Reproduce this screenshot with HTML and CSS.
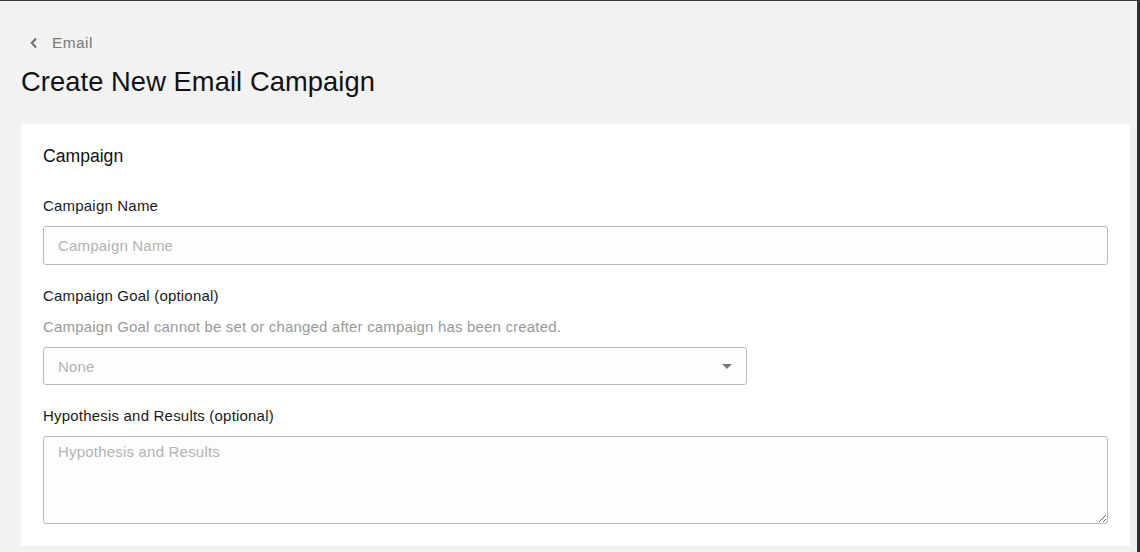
FILE: index.html
```html
<!DOCTYPE html>
<html lang="en">
<head>
<meta charset="utf-8">
<title>Create New Email Campaign</title>
<link rel="stylesheet" href="styles.css">
</head>
<body>
<div class="frame">
  <main class="page">
    <nav class="breadcrumb">
      <svg class="chev" width="10" height="12" viewBox="0 0 10 12"><path d="M7 1.5 L2.8 6 L7 10.5" fill="none" stroke="#6b6b6b" stroke-width="2"/></svg>
      <span class="crumb">Email</span>
    </nav>
    <h1 class="title">Create New Email Campaign</h1>
    <section class="card">
      <h2 class="card-title">Campaign</h2>
      <label class="label">Campaign Name</label>
      <input class="field" type="text" placeholder="Campaign Name">
      <label class="label label-gap">Campaign Goal (optional)</label>
      <p class="hint">Campaign Goal cannot be set or changed after campaign has been created.</p>
      <div class="select">
        <span class="select-value">None</span>
        <span class="caret"></span>
      </div>
      <label class="label label-gap">Hypothesis and Results (optional)</label>
      <textarea class="area" placeholder="Hypothesis and Results"></textarea>
    </section>
  </main>
</div>
</body>
</html>
```
FILE: styles.css
```css
* { box-sizing: border-box; }
html, body { margin: 0; padding: 0; }
body {
  font-family: "Liberation Sans", Arial, sans-serif;
  background: #f2f2f2;
  color: #1a1a1a;
}
.frame {
  width: 1140px;
  height: 552px;
  border-top: 1px solid #3a3a3a;
  border-right: 3px solid #2e2e2e;
  background: #f2f2f2;
  overflow: hidden;
}
.page {
  padding: 32px 7px 0 21px;
}
.breadcrumb {
  display: flex;
  align-items: center;
  height: 20px;
  padding-left: 8px;
  gap: 13px;
}
.chev { display: block; }
.crumb {
  font-size: 15.5px;
  letter-spacing: 0.4px;
  color: #777;
  line-height: 20px;
}
.title {
  margin: 13px 0 0;
  font-size: 27.3px;
  letter-spacing: 0.08px;
  font-weight: 400;
  line-height: 32px;
  color: #111;
}
.card {
  margin-top: 26px;
  background: #fff;
  padding: 20px 22px 22px;
  display: flex;
  flex-direction: column;
}
.card-title {
  margin: 0;
  font-size: 17.6px;
  font-weight: 400;
  line-height: 24px;
  color: #111;
}
.label {
  margin-top: 28px;
  font-size: 15px;
  letter-spacing: 0.2px;
  line-height: 20px;
  color: #1a1a1a;
}
.label-gap { margin-top: 21px; }
.field, .select, .area {
  margin-top: 10px;
  border: 1px solid #b9b9b9;
  border-radius: 3px;
  background: #fdfdfd;
  font-family: "Liberation Sans", Arial, sans-serif;
  font-size: 15px;
  letter-spacing: 0.2px;
  color: #333;
}
.field {
  height: 39px;
  padding: 0 14px;
  width: 100%;
}
.field::placeholder, .area::placeholder { color: #b3b3b3; }
.hint {
  margin: 11px 0 0;
  font-size: 15px;
  letter-spacing: 0.18px;
  line-height: 20px;
  color: #999;
}
.select {
  width: 704px;
  height: 38px;
  padding: 0 14px;
  display: flex;
  align-items: center;
  justify-content: space-between;
}
.select-value { color: #b3b3b3; }
.caret {
  width: 0;
  height: 0;
  border-left: 5px solid transparent;
  border-right: 5px solid transparent;
  border-top: 5px solid #777;
}
.area {
  height: 88px;
  width: 100%;
  padding: 6px 14px;
  resize: vertical;
  line-height: 18px;
}
```
